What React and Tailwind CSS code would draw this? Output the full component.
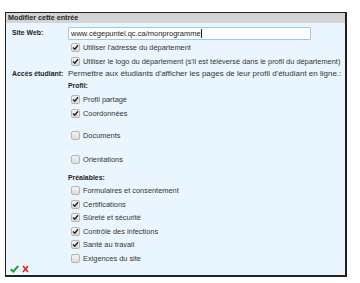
import React from 'react';

const Box = ({ checked }) => (
    <span className="inline-flex items-center justify-center w-[9px] h-[9px] rounded-[2px] border border-[#b5b5b5] bg-gradient-to-b from-[#f4f4f4] to-[#dcdcdc] shrink-0">
        {checked && (
            <svg width="7" height="7" viewBox="0 0 7 7">
                <path d="M1 3.6 L2.8 5.3 L6 1.3" fill="none" stroke="#222" strokeWidth="1.4" />
            </svg>
        )}
    </span>
);

const Option = ({ checked, label, className = '' }) => (
    <div className={`flex items-center gap-[3px] pl-[3px] h-[13.5px] whitespace-nowrap text-[7.4px] ${className}`}>
        <Box checked={checked} />
        <span>{label}</span>
    </div>
);

export default function App() {
    return (
        <div className="w-[360px] h-[283px] bg-white pt-[12px] pl-[5px]" style={{ fontFamily: '"Liberation Sans", Arial, sans-serif' }}>
            <div className="w-[342px] h-[265px] border border-[#222] border-r-2 border-b-2 bg-[#eaf6ff] text-[8px] text-[#333] leading-none overflow-hidden">
                <div className="h-[10px] bg-[#d4d4d4] font-bold text-[7.2px] text-[#222] pl-[2px] flex items-center">Modifier cette entrée</div>

                <div className="grid grid-cols-[56px_1fr] pl-[6px] pt-[4px]">
                    <div className="font-bold text-[6.9px] text-[#222] pt-[3px]">Site Web:</div>
                    <div>
                        <div className="w-[243px] h-[13px] border border-[#9ec6ee] bg-white rounded-[1px] flex items-center pl-[2px] text-[7.5px] text-[#222]">
                            www.cégepuntel.qc.ca/monprogramme<span className="w-px h-[9px] bg-[#222]" />
                        </div>
                        <div className="mt-[1px]">
                            <Option checked label="Utiliser l'adresse du département" />
                            <Option checked label="Utiliser le logo du département (s'il est téléversé dans le profil du département)" />
                        </div>
                    </div>

                    <div className="font-bold text-[6.9px] text-[#222] h-[12px] flex items-center whitespace-nowrap">Accès étudiant:</div>
                    <div>
                        <div className="h-[12px] flex items-center whitespace-nowrap">Permettre aux étudiants d'afficher les pages de leur profil d'étudiant en ligne.:</div>
                        <div className="font-bold text-[6.9px] text-[#222] h-[13px] flex items-center">Profil:</div>
                        <Option checked label="Profil partagé" />
                        <Option checked label="Coordonnées" />
                        <Option label="Documents" className="mt-[9px]" />
                        <Option label="Orientations" className="mt-[10px]" />
                        <div className="font-bold text-[6.9px] text-[#222] h-[12px] flex items-center mt-[6px]">Préalables:</div>
                        <Option label="Formulaires et consentement" />
                        <Option checked label="Certifications" />
                        <Option checked label="Sûreté et sécurité" />
                        <Option checked label="Contrôle des infections" />
                        <Option checked label="Santé au travail" />
                        <Option label="Exigences du site" />
                    </div>
                </div>

                <div className="flex items-center gap-[3px] pl-[4px]">
                    <svg width="9" height="8" viewBox="0 0 9 8">
                        <path d="M0.8 4.2 L3.3 6.6 L8.3 0.9" fill="none" stroke="#1f9a3a" strokeWidth="2" />
                    </svg>
                    <svg width="7" height="8" viewBox="0 0 7 8">
                        <path d="M1 1 L6 7 M6 1 L1 7" fill="none" stroke="#e0201b" strokeWidth="1.6" />
                    </svg>
                </div>
            </div>
        </div>
    );
}
